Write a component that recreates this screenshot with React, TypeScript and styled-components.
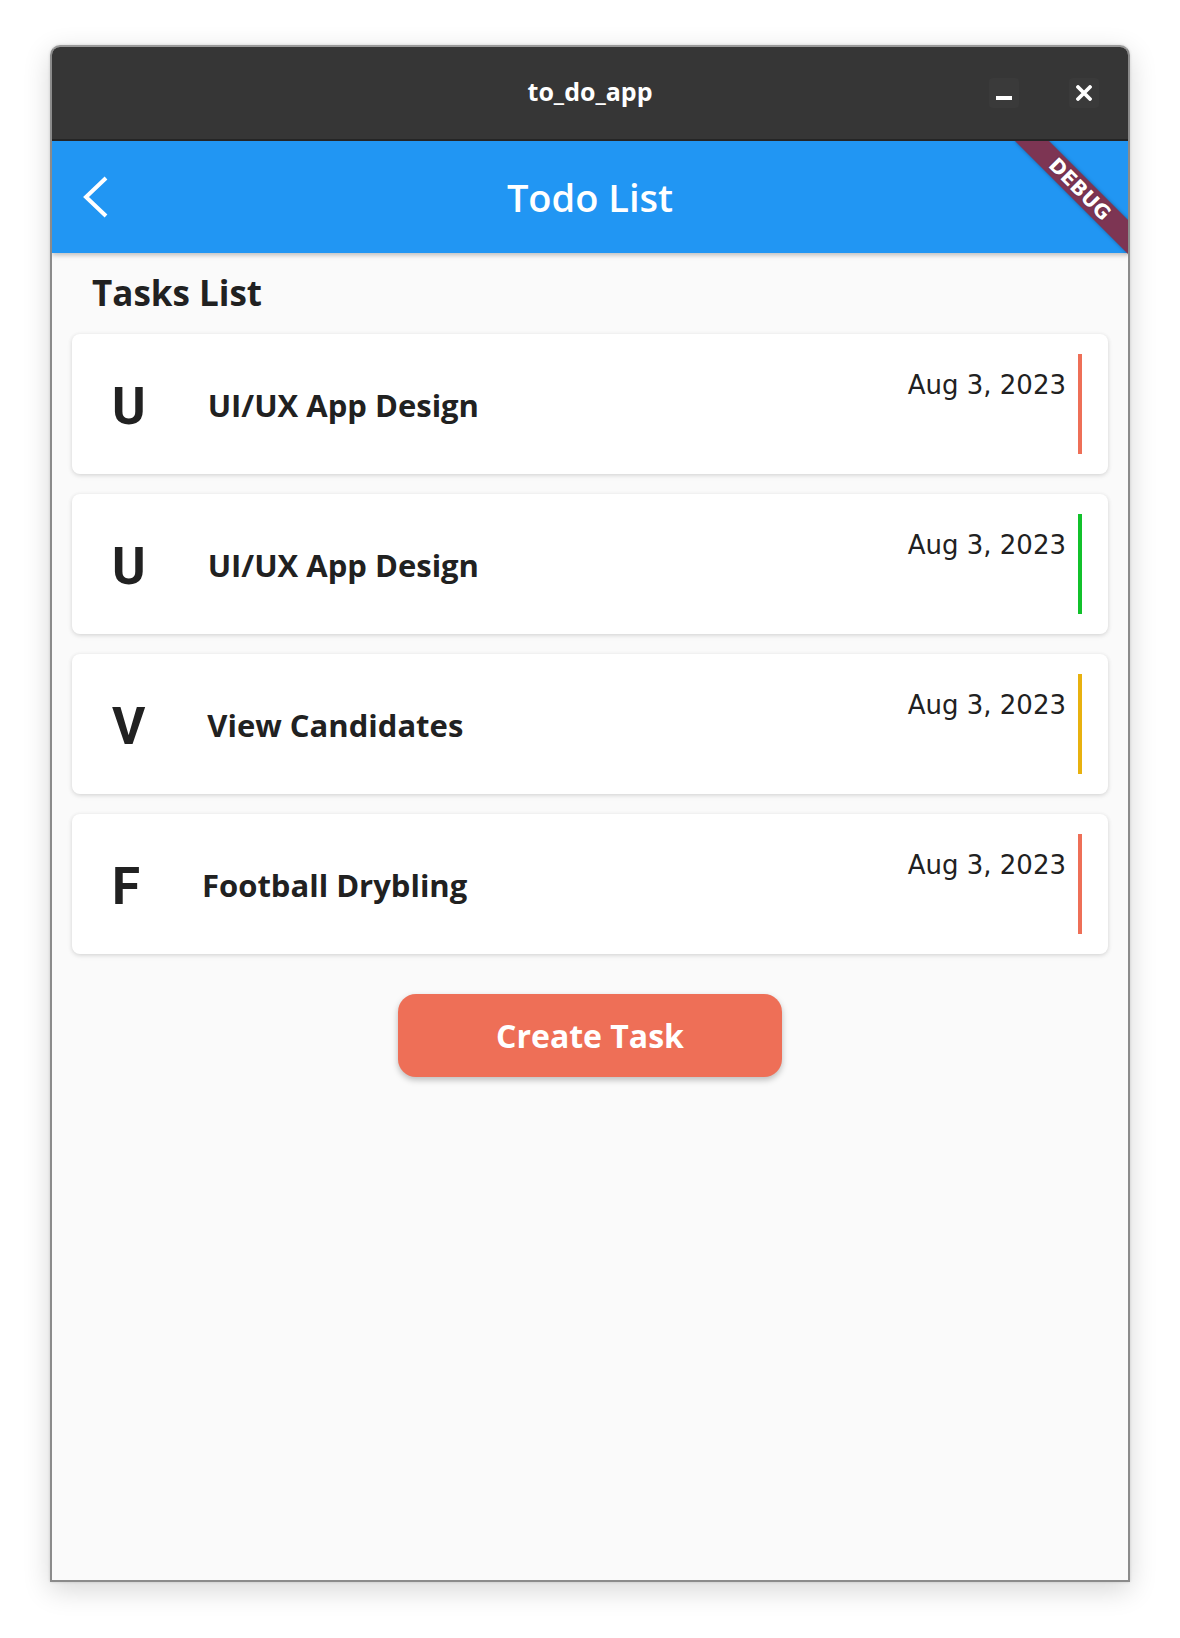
import React from "react";
import styled, { createGlobalStyle } from "styled-components";

const GlobalStyle = createGlobalStyle`
  html, body {
    margin: 0;
    padding: 0;
    background: #ffffff;
  }
  * { box-sizing: border-box; }
`;

const Page = styled.div`
  padding: 45px 50px 0;
  width: 1180px;
  height: 1638px;
  background: #ffffff;
`;

const Window = styled.div`
  width: 1080px;
  height: 1537px;
  border: 2px solid #8b8b8b;
  border-top-color: #9a9a9a;
  border-radius: 10px 10px 0 0;
  overflow: hidden;
  display: flex;
  flex-direction: column;
  box-shadow: 0 8px 28px rgba(0, 0, 0, 0.16), 0 0 3px rgba(0, 0, 0, 0.15);
`;

const TitleBar = styled.div`
  height: 94px;
  flex-shrink: 0;
  background: #363636;
  border-bottom: 2px solid #252525;
  display: grid;
  grid-template-columns: 1fr auto 1fr;
  align-items: center;
`;

const WindowTitle = styled.div`
  grid-column: 2;
  color: #ffffff;
  font-family: "Open Sans", "Noto Sans", sans-serif;
  font-weight: 700;
  font-size: 25px;
  line-height: 1;
  padding-bottom: 4px;
`;

const Controls = styled.div`
  grid-column: 3;
  justify-self: end;
  display: flex;
  gap: 50px;
  padding-right: 29px;
`;

const ControlButton = styled.div`
  width: 30px;
  height: 30px;
  border-radius: 4px;
  background: #3a3a3a;
  display: flex;
  align-items: center;
  justify-content: center;
`;

const AppArea = styled.div`
  flex: 1;
  position: relative;
  overflow: hidden;
  display: flex;
  flex-direction: column;
  background: #fafafa;
`;

const AppBar = styled.header`
  height: 112px;
  flex-shrink: 0;
  background: #2196f3;
  box-shadow: 0 2px 5px rgba(0, 0, 0, 0.26);
  position: relative;
  z-index: 1;
  display: grid;
  grid-template-columns: 1fr auto 1fr;
  align-items: center;
`;

const BackButton = styled.div`
  grid-column: 1;
  justify-self: start;
  padding-left: 30px;
  display: flex;
  align-items: center;
`;

const AppTitle = styled.h1`
  grid-column: 2;
  margin: 0;
  color: #ffffff;
  font-family: "Open Sans", "Noto Sans", sans-serif;
  font-weight: 600;
  font-size: 38px;
  line-height: 1;
`;

const DebugBanner = styled.div`
  position: absolute;
  top: 36px;
  right: -32px;
  width: 160px;
  height: 24px;
  transform: rotate(45deg);
  background: #7d3553;
  box-shadow: 0 0 4px rgba(0, 0, 0, 0.35);
  color: #ffffff;
  font-family: "DejaVu Sans", sans-serif;
  font-weight: 700;
  font-size: 20px;
  line-height: 24px;
  text-align: center;
  z-index: 5;
  text-shadow: 0 0 2px rgba(0, 0, 0, 0.3);
`;

const Body = styled.main`
  padding: 0 20px;
  display: flex;
  flex-direction: column;
`;

const Heading = styled.h2`
  margin: 19px 0 20px 20px;
  color: #212121;
  font-family: "Open Sans", "Noto Sans", sans-serif;
  font-weight: 700;
  font-size: 35px;
  line-height: 42px;
`;

const CardList = styled.div`
  display: flex;
  flex-direction: column;
  gap: 20px;
`;

const Card = styled.div`
  height: 140px;
  background: #ffffff;
  border-radius: 8px;
  box-shadow: 0 1px 4px rgba(0, 0, 0, 0.12), 0 2px 6px rgba(0, 0, 0, 0.05);
  display: flex;
  align-items: center;
  padding: 0 26px 0 40px;
`;

const Letter = styled.div`
  margin-top: 5px;
  color: #212121;
  font-family: Roboto, "Noto Sans", sans-serif;
  font-weight: 700;
  font-size: 51px;
  line-height: 1;
`;

const TaskTitle = styled.div`
  margin-left: 62px;
  margin-top: 1px;
  flex: 1;
  color: #212121;
  font-family: "Open Sans", "Noto Sans", sans-serif;
  font-weight: 700;
  font-size: 31px;
`;

const DateText = styled.div`
  align-self: flex-start;
  margin-top: 36px;
  color: #212121;
  font-family: "DejaVu Sans", sans-serif;
  font-size: 26px;
  line-height: 30px;
`;

const StatusBar = styled.div<{ $color: string }>`
  width: 4px;
  height: 100px;
  margin-left: 12px;
  background: ${(p) => p.$color};
`;

const CreateButton = styled.button`
  align-self: center;
  margin-top: 40px;
  width: 384px;
  height: 83px;
  border: none;
  border-radius: 18px;
  background: #ee6f57;
  box-shadow: 0 3px 6px rgba(0, 0, 0, 0.25);
  color: #ffffff;
  font-family: "Open Sans", "Noto Sans", sans-serif;
  font-weight: 700;
  font-size: 32px;
  cursor: pointer;
`;

type Task = { letter: string; title: string; date: string; color: string };

const tasks: Task[] = [
  { letter: "U", title: "UI/UX App Design", date: "Aug 3, 2023", color: "#ee6f57" },
  { letter: "U", title: "UI/UX App Design", date: "Aug 3, 2023", color: "#11c12b" },
  { letter: "V", title: "View Candidates", date: "Aug 3, 2023", color: "#e8b10f" },
  { letter: "F", title: "Football Drybling", date: "Aug 3, 2023", color: "#ee6f57" },
];

export default function App() {
  return (
    <>
      <GlobalStyle />
      <Page>
        <Window>
          <TitleBar>
            <WindowTitle>to_do_app</WindowTitle>
            <Controls>
              <ControlButton>
                <svg width="16" height="16" viewBox="0 0 16 16">
                  <rect x="0" y="11" width="16" height="4" fill="#ffffff" />
                </svg>
              </ControlButton>
              <ControlButton>
                <svg width="16" height="16" viewBox="0 0 16 16">
                  <path
                    d="M2 2 L14 14 M14 2 L2 14"
                    stroke="#ffffff"
                    strokeWidth="3.8"
                    strokeLinecap="round"
                  />
                </svg>
              </ControlButton>
            </Controls>
          </TitleBar>
          <AppArea>
            <AppBar>
              <BackButton>
                <svg width="28" height="44" viewBox="0 0 28 44">
                  <polyline
                    points="24,3 4,22 24,41"
                    fill="none"
                    stroke="#ffffff"
                    strokeWidth="4"
                    strokeLinejoin="miter"
                  />
                </svg>
              </BackButton>
              <AppTitle>Todo List</AppTitle>
            </AppBar>
            <DebugBanner>DEBUG</DebugBanner>
            <Body>
              <Heading>Tasks List</Heading>
              <CardList>
                {tasks.map((t, i) => (
                  <Card key={i}>
                    <Letter>{t.letter}</Letter>
                    <TaskTitle>{t.title}</TaskTitle>
                    <DateText>{t.date}</DateText>
                    <StatusBar $color={t.color} />
                  </Card>
                ))}
              </CardList>
              <CreateButton>Create Task</CreateButton>
            </Body>
          </AppArea>
        </Window>
      </Page>
    </>
  );
}
